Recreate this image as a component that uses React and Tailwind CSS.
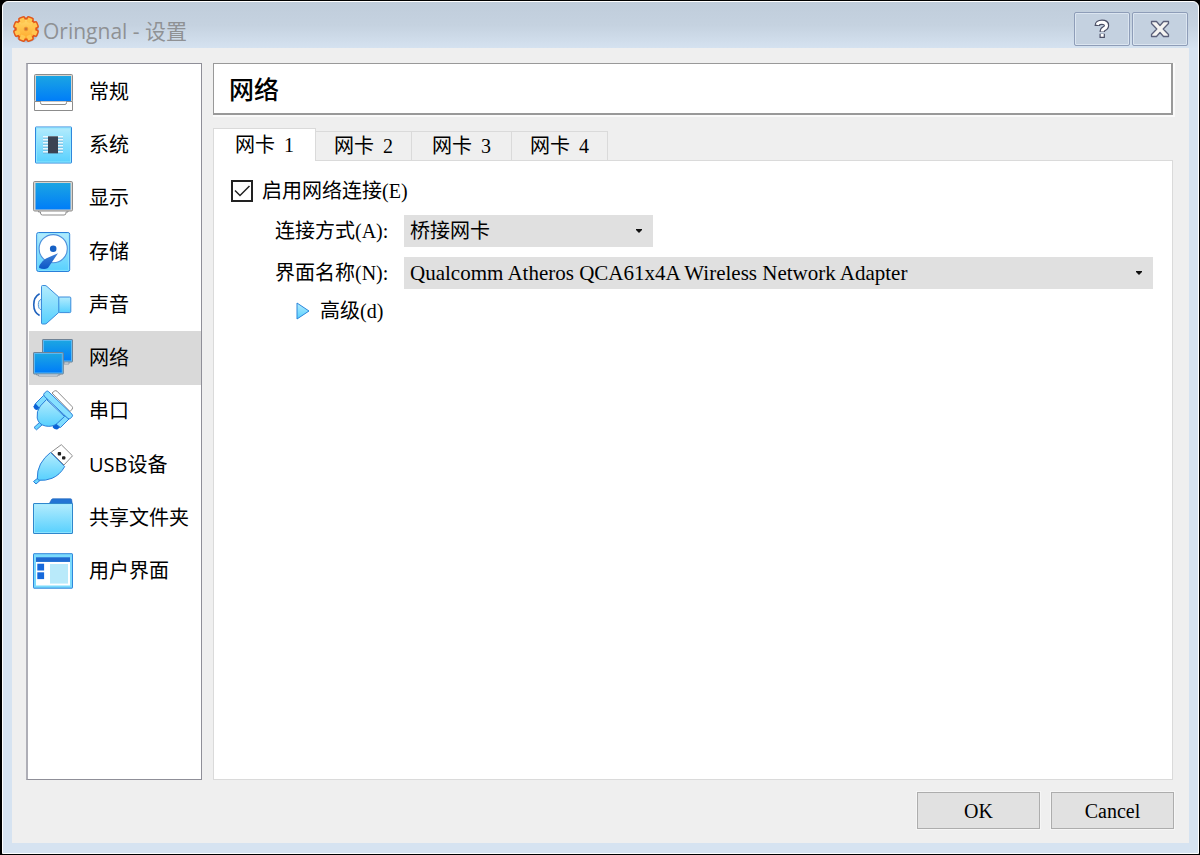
import { useState } from "react";

const Gradients = () => (
  <svg width="0" height="0" className="absolute" aria-hidden="true">
    <defs>
      <linearGradient id="screen" x1="0" y1="0" x2="0" y2="1">
        <stop offset="0" stopColor="#1ba5e3" />
        <stop offset="1" stopColor="#007df8" />
      </linearGradient>
      <linearGradient id="sky" x1="0" y1="0" x2="0" y2="1">
        <stop offset="0" stopColor="#b4ecfd" />
        <stop offset="1" stopColor="#57d0fe" />
      </linearGradient>
      <linearGradient id="gold" x1="0" y1="0" x2="0" y2="1">
        <stop offset="0" stopColor="#ffd768" />
        <stop offset="1" stopColor="#ffab2c" />
      </linearGradient>
      <linearGradient id="arm" x1="0" y1="0" x2="0" y2="1">
        <stop offset="0" stopColor="#3f7fd4" />
        <stop offset="1" stopColor="#0b57c8" />
      </linearGradient>
    </defs>
  </svg>
);

const Icon = ({ children }) => (
  <svg viewBox="0 0 40 40" className="size-10 shrink-0 overflow-visible" aria-hidden="true">
    {children}
  </svg>
);

const GeneralIcon = () => (
  <Icon>
    <path d="M1.5 29.5V38.5H39.5V29.5" fill="#fff" stroke="#8c8c8c" />
    <rect x="1.5" y="2.5" width="38" height="27" rx="1" fill="#d8d4ce" stroke="#8c8c8c" />
    <rect x="3" y="4" width="35" height="25" fill="url(#screen)" />
    <path d="M1.5 29.5H7.5V30.5Q7.5 32.5 9 32.5H32Q33.5 32.5 33.5 30.5V29.5H39.5" fill="#fff" stroke="#8c8c8c" />
  </Icon>
);

const SystemIcon = () => (
  <Icon>
    <rect x="2.5" y="2" width="36" height="36" rx="0.5" fill="url(#sky)" stroke="#2f86dc" />
    <rect x="3.5" y="3" width="34" height="34" fill="none" stroke="#8fe6ff" />
    {[12, 15, 18, 21, 24, 27].map((y) => (
      <g key={y}>
        <path d={`M10 ${y}H30`} stroke="#fff" strokeWidth="1.6" />
        <path d={`M10 ${y + 1}H30`} stroke="#5aa5cf" strokeWidth="0.7" />
      </g>
    ))}
    <rect x="15" y="11.3" width="10" height="17" fill="#3a4252" />
  </Icon>
);

const DisplayIcon = () => (
  <Icon>
    <path d="M5.5 32V34H7.5V35Q7.5 37 9.5 37H31Q33 37 33 35V34H35V32" fill="#fff" stroke="#8c8c8c" />
    <rect x="0.5" y="3.5" width="39" height="29.5" rx="1.2" fill="#d8d4ce" stroke="#8c8c8c" />
    <rect x="2.5" y="5" width="35" height="26.5" fill="url(#screen)" />
  </Icon>
);

const StorageIcon = () => (
  <Icon>
    <rect x="3.7" y="0.5" width="33" height="39" rx="1.8" fill="url(#sky)" stroke="#2a7fd9" />
    <rect x="4.8" y="1.6" width="30.8" height="36.8" rx="1" fill="none" stroke="#8fe6ff" strokeWidth="0.8" />
    <circle cx="20.2" cy="16.7" r="14.1" fill="#fff" stroke="#4c90dc" strokeWidth="1.1" />
    <circle cx="20.2" cy="16.7" r="3.3" fill="#1560c4" />
    <path d="M25 21.2L13 26.5Q9.5 28.5 7 32.5Q5.5 35 6.3 36Q9 37.2 13 36.8Q15.5 36.3 17 33Z" fill="url(#arm)" />
  </Icon>
);

const SoundIcon = () => (
  <Icon>
    <path d="M8.5 14.3Q5.3 14.8 5.3 19.6T8.5 24.8Z" fill="#cfeefc" stroke="#5596d6" />
    <path d="M6.6 8.8C-1.2 13 -1.2 26.5 6.6 30.5" fill="none" stroke="#1f62bd" strokeWidth="1.6" />
    <rect x="25.5" y="12" width="12.3" height="15.6" rx="1" fill="url(#sky)" stroke="#3b8cdc" />
    <path d="M8.5 1.5Q8.5 0.5 9.5 0.5H12Q13 0.5 14 1.5L25.8 12V27.4L14 38Q13 39 12 39H9.5Q8.5 39 8.5 38Z" fill="url(#sky)" stroke="#3b8cdc" />
  </Icon>
);

const NetworkIcon = () => (
  <Icon>
    <path d="M31 24V26H36V24" fill="#eee" stroke="#8c9aa8" />
    <rect x="9.5" y="1.5" width="30" height="22.5" rx="0.6" fill="#5cb8f2" stroke="#6f8396" />
    <rect x="11" y="3" width="27" height="19.5" fill="url(#screen)" />
    <path d="M3.5 35.5V37H5.5V38H25V37H27V35.5" fill="#e6f2fc" stroke="#8c9aa8" />
    <rect x="0.5" y="14.5" width="29.8" height="21.5" rx="0.6" fill="#5cb8f2" stroke="#6f8396" />
    <rect x="2" y="16" width="26.8" height="18.5" fill="url(#screen)" />
  </Icon>
);

const SerialIcon = () => (
  <Icon>
    <path d="M19 2L21.5 0Q22.8 -0.8 24 0.2L39 15.5Q40 16.5 39.3 18L37 20.5Z" fill="#fff" stroke="#8c8c8c" />
    <path d="M10.5 4.5L15 9L8 16Q6 18 3.8 17.5L2 15Q1.5 13.5 3 12Z" fill="#7fdcff" stroke="#2a7fd9" />
    <path d="M2.5 12.6L7 17.2Q4.8 19.6 2.2 18.6Q0.4 17.5 0.6 15.2Z" fill="#0b63d6" />
    <path d="M31 24L36 28L27.5 36.5L22 32.5Z" fill="#7fdcff" stroke="#2a7fd9" />
    <path d="M22.3 32L27 36.4L24.2 38.6Q21.5 38.8 19.8 36.6Q19.2 34.8 22.3 32Z" fill="#0b63d6" />
    <path d="M7 31L1 36.5L3.5 38.8L9.5 33.5Z" fill="#6bd6ff" stroke="#2a7fd9" />
    <path d="M13.5 8.5L31.5 25.5L24 32.5Q19.5 36.3 12.5 35Q5.5 33.5 4.2 27Q3.2 20.5 7.3 15Z" fill="url(#sky)" stroke="#2a7fd9" />
    <path d="M11.3 2.2L13.5 0.3Q14.5 -0.3 15.5 0.6L39 23.2Q40 24.2 39.3 25.3L37.3 27.6Q36 28.3 35 27.5L11.3 5.2Q10 3.6 11.3 2.2Z" fill="#86e0ff" stroke="#2a7fd9" />
  </Icon>
);

const UsbIcon = () => (
  <Icon>
    <path d="M28.3 -0.3L39.5 10.8L31 20L18.2 7.2Z" fill="#fff" stroke="#8c8c8c" strokeLinejoin="round" />
    <rect x="24.7" y="7" width="3.4" height="3.4" rx="1" fill="#222" />
    <rect x="29" y="11.2" width="3.4" height="3.4" rx="1" fill="#222" />
    <path d="M5.5 32.5L0.5 36.5L3 39L7.5 35Z" fill="#6bd6ff" stroke="#2a7fd9" />
    <path d="M17.5 7.5L31.7 21.5Q27 30 19 33.3Q12 36 6 35.2Q4.5 34.8 4.3 33Q4 26 7.5 19Q11.5 12 17.5 7.5Z" fill="url(#sky)" stroke="#2a7fd9" strokeLinejoin="round" />
  </Icon>
);

const FolderIcon = () => (
  <Icon>
    <path d="M16 6L18.5 1.5Q19 0.7 20 0.7H37.5Q38.5 0.7 38.7 1.7L39.3 6Z" fill="#2374d4" stroke="#1d62ba" strokeWidth="0.6" />
    <rect x="0.5" y="5.5" width="39" height="30" rx="0.5" fill="url(#sky)" stroke="#2f86cc" />
    <rect x="1.5" y="6.5" width="37" height="28" fill="none" stroke="#a0ebff" strokeWidth="0.7" />
  </Icon>
);

const InterfaceIcon = () => (
  <Icon>
    <rect x="0.5" y="2.7" width="39" height="34.5" rx="0.5" fill="#7adafc" stroke="#2f86dc" />
    <rect x="3" y="6.3" width="34" height="4.6" fill="#1f69cf" />
    <rect x="3" y="11" width="34" height="23.5" fill="#fff" />
    <rect x="4.3" y="12.7" width="6.8" height="6.8" fill="#1668db" />
    <rect x="4.3" y="21.3" width="6.8" height="6.8" fill="#1668db" />
    <rect x="17" y="13" width="18" height="19.6" fill="#b9eafa" />
  </Icon>
);

const gearAngles = [22.5, 67.5, 112.5, 157.5, 202.5, 247.5, 292.5, 337.5];

const GearIcon = () => (
  <svg viewBox="0 0 28 28" className="size-7 shrink-0" aria-hidden="true">
    <ellipse cx="14.5" cy="15.5" rx="12.5" ry="12" fill="#8fa0b4" opacity="0.5" />
    <g fill="#e2571b">
      <circle cx="14" cy="14" r="11.4" />
      {gearAngles.map((a) => (
        <rect key={a} x="10.2" y="0.9" width="7.6" height="8" rx="2" transform={`rotate(${a} 14 14)`} />
      ))}
    </g>
    <circle cx="14" cy="14" r="9.4" fill="url(#gold)" />
    <g fill="#ffc650">
      {gearAngles.map((a) => (
        <rect key={a} x="11.6" y="2.3" width="4.8" height="5" rx="1" transform={`rotate(${a} 14 14)`} />
      ))}
    </g>
    <circle cx="14" cy="14" r="1.8" fill="#c9783a" stroke="#f0902c" />
  </svg>
);

const pages = [
  ["常规", GeneralIcon],
  ["系统", SystemIcon],
  ["显示", DisplayIcon],
  ["存储", StorageIcon],
  ["声音", SoundIcon],
  ["网络", NetworkIcon],
  ["串口", SerialIcon],
  ["USB设备", UsbIcon],
  ["共享文件夹", FolderIcon],
  ["用户界面", InterfaceIcon],
];

const tabs = [
  [1, "w-[103px]"],
  [2, "w-24"],
  [3, "w-[100px]"],
  [4, "w-24"],
];

const TitleButton = ({ label, children }) => (
  <button
    type="button"
    aria-label={label}
    className="flex h-[34px] w-14 items-center justify-center rounded-xs border border-[#8e9db8] bg-[#c4d1e0] shadow-[inset_0_0_0_1px_#dbe5f0]"
  >
    {children}
  </button>
);

const Select = ({ id, options, className }) => (
  <div className={`relative h-8 ${className}`}>
    <select id={id} className="size-full appearance-none bg-[#e0e0e0] pl-[6px] pr-8 text-black outline-none">
      {options.map((o) => (
        <option key={o}>{o}</option>
      ))}
    </select>
    <svg viewBox="0 0 6 4" className="pointer-events-none absolute right-[11px] top-[14px] h-1 w-1.5" aria-hidden="true">
      <path d="M0 0H6V1L3 4L0 1Z" fill="#111" />
    </svg>
  </div>
);

export default function App() {
  const [page, setPage] = useState("网络");
  const [tab, setTab] = useState(1);

  return (
    <div className="flex min-h-screen flex-col bg-black pt-px pr-px pb-px pl-0.5 font-['Liberation_Serif','Noto_Sans_CJK_SC',serif] text-[20px] leading-6 text-black">
      <Gradients />
      <div className="flex flex-1 flex-col rounded-t-md border border-white bg-[#d6e3f1] px-[9px] pb-[10px]">
        <header className="-mx-[9px] flex h-[46px] items-start justify-between rounded-t-md bg-linear-to-b from-[#c0cddb] via-[#c5d2e0] to-[#d5e2f0] pl-[9px] pr-[10px] pt-[10px]">
          <div className="flex items-center pt-[3px] font-['Open_Sans','Noto_Sans_CJK_SC',sans-serif]">
            <GearIcon />
            <h1 className="pt-[3px] pl-[3px] text-[21px] text-[#8f9194]">Oringnal - 设置</h1>
          </div>
          <div className="flex gap-0.5">
            <TitleButton label="帮助">
              <svg viewBox="0 0 20 20" className="size-5" fill="none" aria-hidden="true">
                <path d="M5.2 7Q5.2 3.2 10 3.2T14.5 6.4Q14.5 8.4 12.2 9.6Q10.2 10.6 10.2 13M10.2 14.8V19" stroke="#4b4f66" strokeWidth="5.4" />
                <path d="M5.2 5.8Q5.8 3.2 10 3.2T14.5 6.4Q14.5 8.4 12.2 9.6Q10.2 10.6 10.2 12.4M10.2 15V17.8" stroke="#fff" strokeWidth="3" />
              </svg>
            </TitleButton>
            <TitleButton label="关闭">
              <svg viewBox="0 0 20 18" className="h-[18px] w-5" aria-hidden="true">
                <path
                  d="M1.5 1.5H6.5L10 5.5L13.5 1.5H18.5V3.5L13.2 9L18.5 14.5V16.5H13.5L10 12.5L6.5 16.5H1.5V14.5L6.8 9L1.5 3.5Z"
                  fill="#f5f4f2"
                  stroke="#5b607a"
                  strokeWidth="1.3"
                  strokeLinejoin="round"
                />
              </svg>
            </TitleButton>
          </div>
        </header>

        <div className="flex flex-1 flex-col gap-3 bg-[#efefef] pt-[15px] pr-4 pb-[14px] pl-[14px]">
          <div className="flex flex-1 gap-[11px]">
            <nav className="w-44 shrink-0 border border-l-2 border-[#8f8f98] border-l-[#aeaeb6] bg-white pt-px pl-px font-['Open_Sans','Noto_Sans_CJK_SC',sans-serif]">
              <ul className="grid h-[533px] grid-rows-10">
                {pages.map(([name, PageIcon]) => (
                  <li key={name} className="flex">
                    <button
                      type="button"
                      onClick={() => setPage(name)}
                      className={`flex flex-1 items-center gap-4 pl-1 text-left ${page === name ? "bg-[#d9d9d9]" : ""}`}
                    >
                      <PageIcon />
                      <span>{name}</span>
                    </button>
                  </li>
                ))}
              </ul>
            </nav>

            <main className="flex min-w-0 flex-1 flex-col">
              <h2 className="flex h-[52px] items-center border border-r-2 border-b-2 border-[#999] bg-white pt-1 pl-[15px] text-[25px] font-medium shadow-[1px_1px_0_1px_#fafafa]">
                {page}
              </h2>

              <div role="tablist" className="mt-3 flex h-[33px] items-end">
                {tabs.map(([n, width]) => (
                  <button
                    key={n}
                    type="button"
                    role="tab"
                    aria-selected={tab === n}
                    onClick={() => setTab(n)}
                    className={`border-[#dadada] text-center ${width} ${
                      tab === n ? "relative -mb-px h-[33px] border border-b-0 bg-white" : "h-[29px] border-t border-r"
                    }`}
                  >
                    网卡 <span className="pl-1">{n}</span>
                  </button>
                ))}
              </div>

              <section role="tabpanel" className="flex-1 border border-[#dadada] bg-white pt-[14px] pr-[19px] pl-[17px]">
                <label className="flex h-8 w-fit items-center gap-[9px]">
                  <span className="relative size-[22px]">
                    <input
                      type="checkbox"
                      defaultChecked
                      className="peer block size-full appearance-none border-2 border-[#222] bg-white"
                    />
                    <svg viewBox="0 0 22 22" className="pointer-events-none absolute inset-0 hidden peer-checked:block" aria-hidden="true">
                      <path d="M4 10.5L9 15.5L18.5 6" fill="none" stroke="#222" strokeWidth="1.5" />
                    </svg>
                  </span>
                  启用网络连接(E)
                </label>

                <div className="mt-2 grid grid-cols-[129px_1fr] items-center gap-y-[10px] pl-11">
                  <label htmlFor="attach">连接方式(A):</label>
                  <Select id="attach" options={["桥接网卡"]} className="w-[249px]" />
                  <label htmlFor="adapter">界面名称(N):</label>
                  <Select
                    id="adapter"
                    options={["Qualcomm Atheros QCA61x4A Wireless Network Adapter"]}
                    className="text-[21px]"
                  />
                </div>

                <button type="button" className="mt-[10px] ml-[65px] flex items-center gap-[10px]">
                  <svg viewBox="0 0 14 18" className="h-[18px] w-3.5" aria-hidden="true">
                    <path d="M1 1L13 9L1 17Z" fill="url(#sky)" stroke="#2a86dc" strokeLinejoin="round" />
                  </svg>
                  高级(d)
                </button>
              </section>
            </main>
          </div>

          <footer className="-mr-px flex justify-end gap-[11px]">
            {["OK", "Cancel"].map((t) => (
              <button
                key={t}
                type="button"
                className="h-[37px] w-[123px] border border-[#adadad] bg-[#e1e1e1] shadow-[0_0_0_1px_#f6f6f6]"
              >
                {t}
              </button>
            ))}
          </footer>
        </div>
      </div>
    </div>
  );
}
